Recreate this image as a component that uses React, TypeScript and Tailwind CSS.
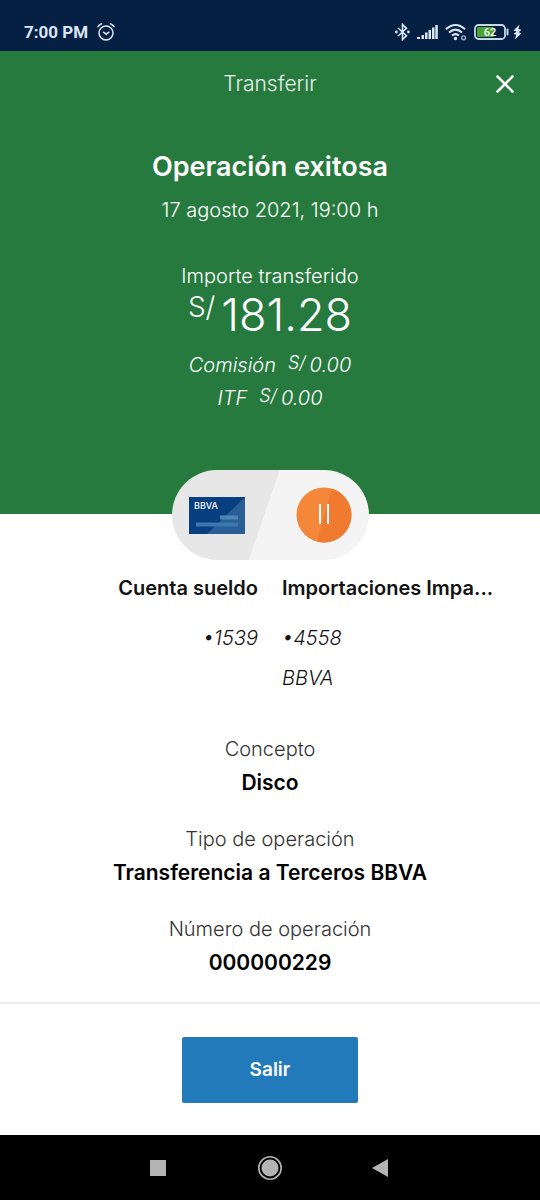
import { X } from 'lucide-react';

const details = [
  { label: 'Concepto', value: 'Disco' },
  { label: 'Tipo de operación', value: 'Transferencia a Terceros BBVA' },
  { label: 'Número de operación', value: '000000229' },
];

const fees = [
  { label: 'Comisión', value: '0.00' },
  { label: 'ITF', value: '0.00' },
];

function StatusBar() {
  return (
    <div className="flex h-[51px] items-end justify-between bg-[#062044] pb-[7px] pl-6 pr-[18px] text-[#dbe6f5]">
      <div className="flex h-6 items-center gap-2">
        <span className="font-[Roboto,sans-serif] text-[17px] font-bold leading-6">7:00 PM</span>
        <svg width="20" height="20" viewBox="0 0 20 20" fill="none" stroke="currentColor" strokeWidth="1.5" strokeLinecap="round">
          <circle cx="10" cy="11" r="7" />
          <path d="M7.500 10.200l2.700 2 2.700-2" />
          <path d="M2 4.600Q3.400 2.600 5.600 1.800M18 4.600Q16.600 2.600 14.400 1.800" />
        </svg>
      </div>

      <div className="flex h-6 items-center gap-[7px]">
        {/* Bluetooth */}
        <svg width="15" height="18" viewBox="0 0 15 18" fill="none" stroke="currentColor" strokeWidth="1.6">
          <path d="M3 5L11.500 12.700 7.500 16.500V1.500L11.500 5.300 3 13" />
          <circle cx="1.400" cy="9" r="1.400" fill="currentColor" stroke="none" />
          <circle cx="13.400" cy="9" r="1.400" fill="currentColor" stroke="none" />
        </svg>
        {/* Signal */}
        <svg width="21" height="16" viewBox="0 0 21 16" fill="currentColor">
          <rect x="0" y="13" width="3" height="2" />
          <rect x="4.500" y="11" width="2.500" height="4" />
          <rect x="8" y="8.500" width="2.500" height="6.500" />
          <rect x="11.500" y="6" width="2.500" height="9" />
          <rect x="15" y="3.500" width="2.500" height="11.500" />
          <rect x="18.300" y="1" width="2.500" height="14" />
        </svg>
        {/* Wi-Fi */}
        <svg width="22" height="18" viewBox="0 0 22 18" fill="none" stroke="currentColor" strokeWidth="2">
          <path d="M1 6.200Q10.500-2.200 20 6.200" />
          <path d="M4 9.500Q10.500 3.800 17 9.500" />
          <path d="M7 12.600Q10.500 9.600 14 12.600" />
          <circle cx="10.500" cy="15.500" r="1.700" fill="currentColor" stroke="none" />
          <circle cx="18.600" cy="14.800" r="1.900" strokeWidth="1.400" opacity="0.7" />
        </svg>
        {/* Battery */}
        <div className="flex items-center gap-1">
          <svg width="35" height="16" viewBox="0 0 35 16">
            <rect x="1" y="1" width="30" height="14" rx="3.500" fill="none" stroke="#c9d6ea" strokeWidth="1.800" />
            <rect x="3" y="3" width="17" height="10" rx="1.500" fill="#4aa52e" />
            <path d="M33.500 5.500v5" stroke="#c9d6ea" strokeWidth="2" strokeLinecap="round" />
            <text x="16" y="12" textAnchor="middle" fill="#fff" fontFamily="Roboto, sans-serif" fontSize="11" fontWeight="500">62</text>
          </svg>
          <svg width="9" height="16" viewBox="0 0 9 16" fill="currentColor">
            <path d="M6.500 0.500L0.500 6.500 3.500 7.500 0.500 10 3.200 10.700 2 15.500 8.500 9.300 5.600 8.300 8.500 5.800 5.500 5z" />
          </svg>
        </div>
      </div>
    </div>
  );
}

function AccountsPill() {
  return (
    <div className="mx-auto -mt-11 flex h-[90px] w-[197px] items-center justify-between overflow-hidden rounded-full bg-[linear-gradient(109deg,#e7e7e7_47%,#f4f4f4_47.500%)] px-[17px]">
      <svg width="56" height="37" viewBox="0 0 56 37" role="img" aria-label="BBVA">
        <rect width="56" height="37" fill="#073f80" />
        <path d="M56 0v37H18z" fill="#2a5e96" />
        <rect x="31" y="18.500" width="18" height="4" fill="#4a86b8" />
        <rect x="7" y="25.500" width="42" height="4" fill="#3a79b0" />
        <text x="5" y="12" fill="#fff" fontFamily="Inter, sans-serif" fontSize="9" fontWeight="500">BBVA</text>
      </svg>
      <svg width="56" height="56" viewBox="0 0 56 56">
        <circle cx="28" cy="28" r="27.500" fill="#f4873a" />
        <path d="M36 1.700A27.500 27.500 0 0 1 21 54.600z" fill="#ef7a30" />
        <path d="M24 17v20M32 17v20" stroke="#fff" strokeWidth="2" />
      </svg>
    </div>
  );
}

export default function App() {
  return (
    <div className="flex min-h-screen flex-col bg-white font-[Inter,sans-serif] text-[#121212]">
      <StatusBar />

      <section className="bg-[#277a3e] pb-[99px] text-center text-white">
        <header className="grid h-[66px] grid-cols-[46px_1fr_46px] items-center px-3">
          <h1 className="col-start-2 text-[21px] font-light leading-7 text-white/90">Transferir</h1>
          <button type="button" aria-label="Cerrar" className="flex justify-center">
            <X size={30} strokeWidth={2} />
          </button>
        </header>

        <h2 className="mt-[34px] text-[27px] font-semibold leading-8">Operación exitosa</h2>
        <p className="mt-[13px] text-[20px] font-light leading-7">17 agosto 2021, 19:00 h</p>

        <p className="mt-[38px] text-[20px] font-light leading-7">Importe transferido</p>
        <p className="mt-px flex justify-center gap-[6px] text-[45px] font-light leading-[48px]">
          <span className="text-[28px] leading-8">S/</span>
          <span>181.28</span>
        </p>
        <div className="mt-[10px]">
          {fees.map((fee) => (
            <p key={fee.label} className="flex justify-center text-[20px] font-light italic leading-[33px]">
              <span className="mr-3">{fee.label}</span>
              <span className="mr-1 text-[18px] leading-7">S/</span>
              <span>{fee.value}</span>
            </p>
          ))}
        </div>
      </section>

      <main className="flex-1">
        <AccountsPill />

        <div className="mt-[14px] grid grid-cols-2 gap-6 text-[20px] leading-7">
          <div className="min-w-0 pl-6 text-right">
            <p className="truncate font-semibold">Cuenta sueldo</p>
            <p className="mt-[22px] font-light italic">•1539</p>
          </div>
          <div className="min-w-0 pr-10">
            <p className="truncate font-semibold">Importaciones Impa...</p>
            <p className="mt-[22px] font-light italic">•4558</p>
            <p className="mt-3 font-light italic">BBVA</p>
          </div>
        </div>

        <dl className="mt-[43px] flex flex-col gap-7 pb-6 text-center leading-7">
          {details.map((item) => (
            <div key={item.label}>
              <dt className="text-[20px] font-light text-[#333]">{item.label}</dt>
              <dd className="mt-[6px] text-[21px] font-semibold text-black">{item.value}</dd>
            </div>
          ))}
        </dl>
      </main>

      <footer className="flex justify-center border-t-2 border-[#ececec] pb-8 pt-[33px]">
        <button type="button" className="h-[66px] w-44 rounded-[2px] bg-[#237aba] text-[19px] font-semibold text-white">
          Salir
        </button>
      </footer>

      <nav className="flex h-[65px] items-center justify-center gap-[87px] bg-black text-[#b4b4b4]">
        <button type="button" aria-label="Recientes">
          <svg width="24" height="24" viewBox="0 0 24 24" fill="currentColor">
            <rect x="3" y="4" width="16" height="16" />
          </svg>
        </button>
        <button type="button" aria-label="Inicio">
          <svg width="24" height="24" viewBox="0 0 24 24">
            <circle cx="12" cy="12" r="11.200" fill="none" stroke="currentColor" strokeWidth="1.600" />
            <circle cx="12" cy="12" r="8.500" fill="currentColor" />
          </svg>
        </button>
        <button type="button" aria-label="Atrás">
          <svg width="24" height="24" viewBox="0 0 24 24" fill="currentColor">
            <path d="M19 3v18L3 12z" />
          </svg>
        </button>
      </nav>
    </div>
  );
}
